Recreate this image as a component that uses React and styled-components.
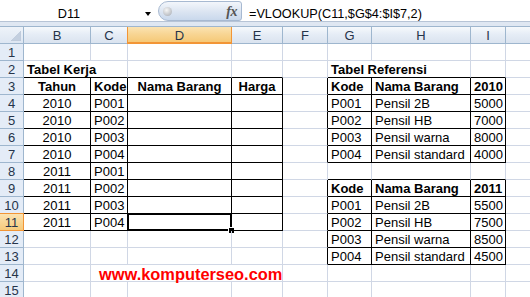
import React from 'react';
import styled, { createGlobalStyle } from 'styled-components';

const GRID = '#d0d7e5';
const HDR = '#9eb6ce';
const BLACK = '#000';
const ORANGE = '#f29536';

const Global = createGlobalStyle`
  html, body { margin: 0; padding: 0; background: #fff; overflow: hidden; }
  body { font-family: "Liberation Sans", Arial, sans-serif; }
`;

const Window = styled.div`
  width: 530px;
  height: 297px;
  overflow: hidden;
  background: #fff;
`;

const FormulaBar = styled.div`
  display: flex;
  height: 22px;
  box-sizing: border-box;
  border-bottom: 1px solid #b7c4d6;
  background: #fff;
  font: 12.7px/15px "Liberation Sans", Arial, sans-serif;
  color: #000;
`;

const NameBox = styled.div`
  display: flex;
  flex: none;
  width: 158px;
  align-items: flex-start;
  padding-top: 7px;
  box-sizing: border-box;
`;

const NameText = styled.div`
  width: 138px;
  text-align: center;
`;

const DropArrow = styled.div`
  margin-left: 7px;
  margin-top: 5px;
  width: 0;
  height: 0;
  border-left: 3.5px solid transparent;
  border-right: 3.5px solid transparent;
  border-top: 4px solid #000;
`;

const FxPill = styled.div`
  flex: none;
  width: 84px;
  height: 20px;
  margin-top: 1px;
  box-sizing: border-box;
  border: 1px solid #a7b9d1;
  border-radius: 10px 3px 3px 10px;
  background: linear-gradient(#f3f6fb, #dde6f2 50%, #c9d8ec);
  display: flex;
  align-items: center;
  justify-content: space-between;
  padding: 1px 4px 0 4px;
`;

const Dot = styled.div`
  width: 9px;
  height: 9px;
  border-radius: 50%;
  background: radial-gradient(circle at 40% 35%, #f6f6f6, #c0c3c8 65%, #9a9ea6);
`;

const FxLabel = styled.span`
  font: italic bold 14px "Liberation Serif", "Times New Roman", serif;
  color: #555;
  letter-spacing: -0.5px;
`;

const FormulaText = styled.div`
  flex: 1;
  padding: 7px 0 0 7px;
  white-space: nowrap;
`;

const Band = styled.div`
  height: 5px;
  box-sizing: border-box;
  background: #dfe7f2;
  border-bottom: 1px solid ${HDR};
`;

const Sheet = styled.div`
  display: grid;
  grid-template-columns: 24px 67px 37px 104px 51px 45px 44px 99px 35px 64px;
  grid-auto-rows: 17px;
  width: 570px;
`;

const Corner = styled.div`
  box-sizing: border-box;
  border-right: 1px solid ${HDR};
  border-bottom: 1px solid ${HDR};
  background: linear-gradient(#eef3f9, #dde6f2);
  display: flex;
  align-items: flex-end;
  justify-content: flex-end;
  padding: 0 2px 2px 0;
`;

const ColHeader = styled.div`
  box-sizing: border-box;
  border-right: 1px solid ${p => (p.$active ? ORANGE : HDR)};
  border-bottom: 1px solid ${p => (p.$active ? ORANGE : HDR)};
  background: ${p =>
    p.$active
      ? 'linear-gradient(#fbe3b2, #f8d593 45%, #f5c774)'
      : 'linear-gradient(#f6f9fc, #e6edf6 45%, #dae3ef)'};
  box-shadow: ${p => (p.$active ? `-1px 0 0 ${ORANGE}, inset 0 -1px 0 ${ORANGE}` : 'none')};
  font: 13px/14px "Liberation Sans", Arial, sans-serif;
  color: #26344a;
  text-align: center;
  padding-top: 2px;
`;

const RowHeader = styled.div`
  box-sizing: border-box;
  border-right: 1px solid ${p => (p.$active ? ORANGE : HDR)};
  border-bottom: 1px solid ${p => (p.$active ? ORANGE : HDR)};
  background: ${p =>
    p.$active ? 'linear-gradient(#fbe3b2, #f6ca7b)' : '#e4ecf7'};
  box-shadow: ${p => (p.$active ? `0 -1px 0 ${ORANGE}` : 'none')};
  font: 13px/14px "Liberation Sans", Arial, sans-serif;
  color: #26344a;
  text-align: center;
  padding-top: 2px;
`;

const Cell = styled.div`
  position: relative;
  box-sizing: border-box;
  grid-column: span ${p => p.$span || 1};
  border-right: 1px solid ${p => p.$rb};
  border-bottom: 1px solid ${p => p.$bb};
  padding: 2px 3px 0 ${p => p.$indent || 3}px;
  font-family: "Liberation Sans", Arial, sans-serif;
  font-size: ${p => p.$size || 13}px;
  line-height: 14px;
  font-weight: ${p => (p.$bold ? 700 : 400)};
  color: ${p => p.$color || '#000'};
  text-align: ${p => p.$align || 'left'};
  white-space: nowrap;
`;

const Selection = styled.div`
  position: absolute;
  left: -1px;
  top: -1px;
  right: -1px;
  bottom: -1px;
  border: 2px solid #000;
  pointer-events: none;
`;

const FillHandle = styled.div`
  position: absolute;
  right: -5px;
  bottom: -5px;
  width: 5px;
  height: 5px;
  background: #000;
  border: 1px solid #fff;
`;

const COLS = ['B', 'C', 'D', 'E', 'F', 'G', 'H', 'I', 'J'];
// the last column runs off the window edge, so its letter is not in view
const VISIBLE_LABELS = ['B', 'C', 'D', 'E', 'F', 'G', 'H', 'I'];
const codes = ['P001', 'P002', 'P003', 'P004'];
const names = ['Pensil 2B', 'Pensil HB', 'Pensil warna', 'Pensil standard'];
const p2010 = ['5000', '7000', '8000', '4000'];
const p2011 = ['5500', '7500', '8500', '4500'];

const content = {};
const put = (ref, v) => {
  content[ref] = typeof v === 'string' ? { text: v } : v;
};

put('B2', { text: 'Tabel Kerja', bold: true, span: 2 });
put('G2', { text: 'Tabel Referensi', bold: true, span: 2 });
put('B3', { text: 'Tahun', bold: true, align: 'center' });
put('C3', { text: 'Kode', bold: true });
put('D3', { text: 'Nama Barang', bold: true, align: 'center' });
put('E3', { text: 'Harga', bold: true, align: 'center' });
put('G3', { text: 'Kode', bold: true });
put('H3', { text: 'Nama Barang', bold: true });
put('I3', { text: '2010', bold: true, align: 'right' });
put('G9', { text: 'Kode', bold: true });
put('H9', { text: 'Nama Barang', bold: true });
put('I9', { text: '2011', bold: true, align: 'right' });
for (let i = 0; i < 4; i++) {
  put(`B${4 + i}`, { text: '2010', align: 'center' });
  put(`C${4 + i}`, codes[i]);
  put(`B${8 + i}`, { text: '2011', align: 'center' });
  put(`C${8 + i}`, codes[i]);
  put(`G${4 + i}`, codes[i]);
  put(`H${4 + i}`, names[i]);
  put(`I${4 + i}`, { text: p2010[i], align: 'right' });
  put(`G${10 + i}`, codes[i]);
  put(`H${10 + i}`, names[i]);
  put(`I${10 + i}`, { text: p2011[i], align: 'right' });
}
put('C14', {
  text: 'www.komputerseo.com',
  bold: true,
  span: 3,
  color: '#ff0000',
  size: 16.4,
  indent: 8,
});

const within = (c, r, c1, c2, r1, r2) => {
  const i = COLS.indexOf(c);
  return i >= COLS.indexOf(c1) && i <= COLS.indexOf(c2) && r >= r1 && r <= r2;
};

const rightColor = (c, r) =>
  within(c, r, 'B', 'E', 3, 11) ||
  within(c, r, 'F', 'I', 3, 7) ||
  within(c, r, 'F', 'I', 9, 13)
    ? BLACK
    : GRID;

const bottomColor = (c, r) =>
  within(c, r, 'B', 'E', 2, 11) ||
  within(c, r, 'G', 'I', 2, 7) ||
  within(c, r, 'G', 'I', 8, 13)
    ? BLACK
    : GRID;

const ROWS = Array.from({ length: 15 }, (_, i) => i + 1);

function SheetRow({ r }) {
  const cells = [];
  for (let i = 0; i < COLS.length; i++) {
    const c = COLS[i];
    const spec = content[`${c}${r}`] || {};
    const span = spec.span || 1;
    const last = COLS[i + span - 1];
    const selected = c === 'D' && r === 11;
    cells.push(
      <Cell
        key={c}
        $span={span}
        $rb={rightColor(last, r)}
        $bb={bottomColor(c, r)}
        $bold={spec.bold}
        $align={spec.align}
        $color={spec.color}
        $size={spec.size}
        $indent={spec.indent}
      >
        {spec.text}
        {selected && (
          <Selection>
            <FillHandle />
          </Selection>
        )}
      </Cell>
    );
    i += span - 1;
  }
  return (
    <>
      <RowHeader $active={r === 11}>{r}</RowHeader>
      {cells}
    </>
  );
}

export default function App() {
  return (
    <Window>
      <Global />
      <FormulaBar>
        <NameBox>
          <NameText>D11</NameText>
          <DropArrow />
        </NameBox>
        <FxPill>
          <Dot />
          <FxLabel>fx</FxLabel>
        </FxPill>
        <FormulaText>=VLOOKUP(C11,$G$4:$I$7,2)</FormulaText>
      </FormulaBar>
      <Band />
      <Sheet>
        <Corner>
          <svg width="10" height="10" viewBox="0 0 10 10">
            <polygon points="10,0 10,10 0,10" fill="#c3cfdf" stroke="#b0bfd3" strokeWidth="0.5" />
          </svg>
        </Corner>
        {COLS.map(c => (
          <ColHeader key={c} $active={c === 'D'}>
            {VISIBLE_LABELS.includes(c) ? c : ''}
          </ColHeader>
        ))}
        {ROWS.map(r => (
          <SheetRow key={r} r={r} />
        ))}
      </Sheet>
    </Window>
  );
}
